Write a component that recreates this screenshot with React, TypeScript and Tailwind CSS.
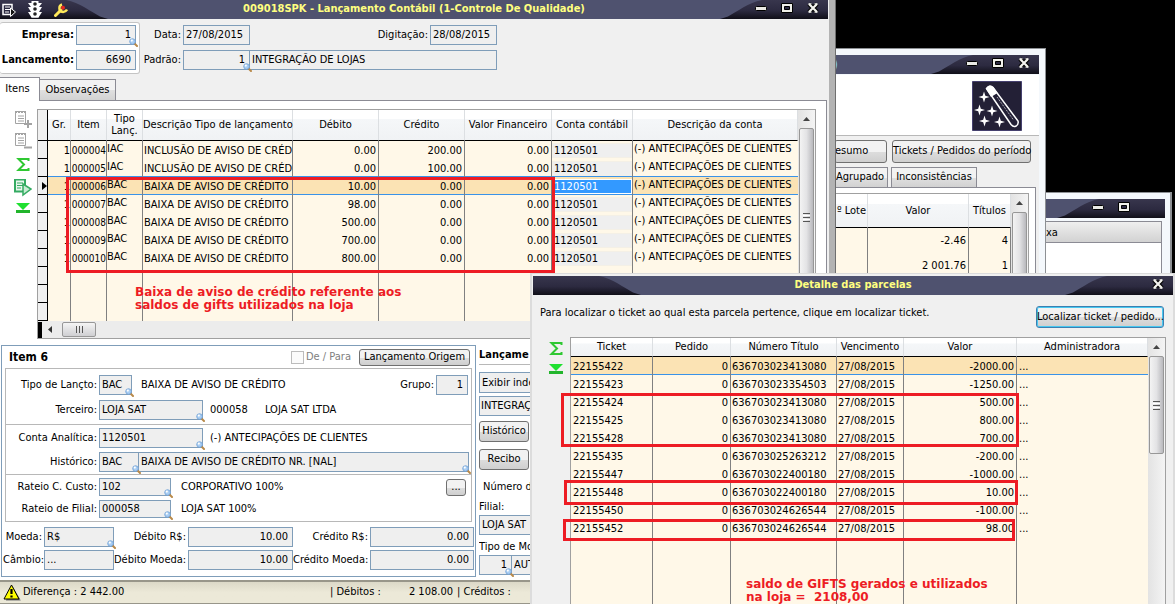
import type { ReactNode } from "react";

type Entry = { item: string; tipo: string; desc: string; debito: string; credito: string };

const entries: Entry[] = [
  { item: "000004", tipo: "IAC", desc: "INCLUSÃO DE AVISO DE CRÉD", debito: "0.00", credito: "200.00" },
  { item: "000005", tipo: "IAC", desc: "INCLUSÃO DE AVISO DE CRÉD", debito: "0.00", credito: "100.00" },
  { item: "000006", tipo: "BAC", desc: "BAIXA DE AVISO DE CRÉDITO", debito: "10.00", credito: "0.00" },
  { item: "000007", tipo: "BAC", desc: "BAIXA DE AVISO DE CRÉDITO", debito: "98.00", credito: "0.00" },
  { item: "000008", tipo: "BAC", desc: "BAIXA DE AVISO DE CRÉDITO", debito: "500.00", credito: "0.00" },
  { item: "000009", tipo: "BAC", desc: "BAIXA DE AVISO DE CRÉDITO", debito: "700.00", credito: "0.00" },
  { item: "000010", tipo: "BAC", desc: "BAIXA DE AVISO DE CRÉDITO", debito: "800.00", credito: "0.00" },
];

const tickets = [
  ["22155422", "636703023413080", "-2000.00"],
  ["22155423", "636703023354503", "-1250.00"],
  ["22155424", "636703023413080", "500.00"],
  ["22155425", "636703023413080", "800.00"],
  ["22155428", "636703023413080", "700.00"],
  ["22155435", "636703025263212", "-200.00"],
  ["22155447", "636703022400180", "-1000.00"],
  ["22155448", "636703022400180", "10.00"],
  ["22155450", "636703024626544", "-100.00"],
  ["22155452", "636703024626544", "98.00"],
];

const th =
  "border-b border-black border-r border-r-[#dcdfe2] bg-linear-to-b from-white from-30% via-[#f5f7f9] via-31% to-[#f0f2f4] p-0 text-center font-normal leading-[12px]";
const td = "overflow-hidden border-r border-[#808080] p-0 pt-0.5 align-top leading-[16px]";
const lineBelow = "shadow-[inset_0_-1px_#3a93e8]";

/* Title bar */

function MinIcon() {
  return (
    <svg width="12" height="12" viewBox="0 0 12 12" aria-hidden="true">
      <rect x="0.5" y="4.5" width="11" height="4" rx="1" fill="#e9e9e4" stroke="#000" />
    </svg>
  );
}

function MaxIcon() {
  return (
    <svg width="12" height="12" viewBox="0 0 12 12" aria-hidden="true">
      <path d="M.5 1.5h11v9H.5z" fill="#f0f0ea" stroke="#000" />
      <path d="M3.5 4.5h5v3h-5z" fill="#2c2a42" stroke="#000" />
    </svg>
  );
}

function CloseIcon() {
  return (
    <svg width="12" height="12" viewBox="0 0 12 12" aria-hidden="true">
      <path d="M2 2l8 8M10 2l-8 8" stroke="#000" strokeWidth="4.4" />
      <path d="M2 2l8 8M10 2l-8 8" stroke="#f4f4f0" strokeWidth="2.2" />
      <path d="M1.500 1.800h3M7.500 1.800h3M1.500 10.200h3M7.500 10.200h3" stroke="#f4f4f0" strokeWidth="1.200" />
    </svg>
  );
}

function Swoop({ side, id }: { side: "left" | "right"; id: string }) {
  return (
    <svg
      className={side === "left" ? "absolute top-0 left-0" : "absolute top-0 right-0 -scale-x-100"}
      width="108"
      height="19"
      viewBox="0 0 108 19"
      aria-hidden="true"
    >
      <defs>
        <linearGradient id={id} x1="0" y1="0" x2="0" y2="1">
          <stop offset="0" stopColor="#38364d" />
          <stop offset="0.55" stopColor="#2c2a40" />
          <stop offset="1" stopColor="#100f18" />
        </linearGradient>
      </defs>
      <path d="M0 0h66c14 3 24 11 34 16.500l8 2.500H0z" fill={`url(#${id})`} />
    </svg>
  );
}

function TitleBar({ id, title, left, children, leftSwoop = true }: {
  id: string;
  title?: string;
  left?: ReactNode;
  children: ReactNode;
  leftSwoop?: boolean;
}) {
  return (
    <div className="relative flex h-[19px] shrink-0 items-center bg-[#4f526f]">
      {leftSwoop && <Swoop side="left" id={`${id}-l`} />}
      <Swoop side="right" id={`${id}-r`} />
      <div className="relative flex w-[84px] items-center">{left}</div>
      <h2 className="relative flex-1 text-center text-[11px] font-bold whitespace-nowrap text-[#ffff80]">{title}</h2>
      <div className="relative flex w-[84px] items-center justify-end gap-[14px] pr-[9px] pb-[3px]">{children}</div>
    </div>
  );
}

function WindowButtons() {
  return (
    <>
      <button type="button" aria-label="Minimizar"><MinIcon /></button>
      <button type="button" aria-label="Maximizar"><MaxIcon /></button>
      <button type="button" aria-label="Fechar"><CloseIcon /></button>
    </>
  );
}

function TitleIcons() {
  return (
    <div className="flex items-center gap-3 pl-[2px]">
      <svg width="14" height="14" viewBox="0 0 14 14" aria-hidden="true">
        <path d="M1 1.500h9v10H1z" fill="#2b2940" stroke="#fff" strokeWidth="1.500" />
        <path d="M3 4h5M3 6.500h5M3 9h4" stroke="#fff" />
        <path d="M8.500 5l5 4-5 4.500z" fill="#111" stroke="#fff" />
      </svg>
      <svg width="14" height="17" viewBox="0 0 14 17" aria-hidden="true">
        <path d="M0 2h14L11 6h3l-3 5h3l-3.500 5.500h-7L0 11h3L0 6h3z" fill="#fff" />
        <path d="M3.500 0h7v16.500h-7z" fill="#fff" />
        <circle cx="7" cy="3" r="1.800" fill="#222" />
        <circle cx="7" cy="8" r="1.800" fill="#222" />
        <circle cx="7" cy="13" r="1.800" fill="#222" />
      </svg>
      <svg width="14" height="14" viewBox="0 0 14 14" aria-hidden="true">
        <path d="M1.500 12.500L7 7" stroke="#ffe95a" strokeWidth="3" strokeLinecap="round" />
        <path d="M8 1.500C4.500 2.500 4.500 8 8 8.800c2.500.500 4-.500 5-2.300" fill="none" stroke="#ffe95a" strokeWidth="2.400" />
        <circle cx="9" cy="4.800" r="2" fill="#e8281e" />
      </svg>
    </div>
  );
}

/* Fields and buttons */

function Lookup() {
  return (
    <svg className="absolute -right-[2px] -bottom-[2px]" width="9" height="9" viewBox="0 0 9 9" aria-hidden="true">
      <path d="M5.500 5.500l2.500 2.500" stroke="#b98a4a" strokeWidth="2" strokeLinecap="round" />
      <circle cx="3.500" cy="3.500" r="2.800" fill="#a9cdf2" stroke="#6f9fd6" strokeWidth="0.800" />
      <circle cx="2.800" cy="2.600" r="1.100" fill="#fff" />
    </svg>
  );
}

function Box({ id, value, width, right, lookup, label, short }: {
  id: string;
  value: string;
  width: string;
  right?: boolean;
  lookup?: boolean;
  label?: string;
  short?: boolean;
}) {
  return (
    <div className={`relative shrink-0 ${width}`}>
      <input
        id={id}
        aria-label={label}
        readOnly
        defaultValue={value}
        className={`block w-full border border-[#7f9db9] bg-[#efefef] pb-0.5 outline-none ${short ? "h-[18px]" : "h-5"} ${
          right ? "pr-1 text-right" : "pl-0.5"
        }`}
      />
      {lookup && <Lookup />}
    </div>
  );
}

function Label({ id, width, children }: { id: string; width: string; children: ReactNode }) {
  return (
    <label htmlFor={id} className={`shrink-0 pr-0.5 text-right whitespace-nowrap ${width}`}>
      {children}
    </label>
  );
}

function Button({ className, children }: { className: string; children: ReactNode }) {
  return (
    <button
      type="button"
      className={`shrink-0 rounded-[3px] border border-[#707070] bg-linear-to-b from-[#f2f2f2] from-50% via-[#dddddd] via-51% to-[#cfcfcf] text-center whitespace-nowrap ${className}`}
    >
      {children}
    </button>
  );
}

/* Scroll bars */

function VScroll({ thumb }: { thumb: string }) {
  return (
    <div className="flex w-[17px] shrink-0 flex-col bg-linear-to-r from-[#e3e3e3] to-[#f4f4f4]" aria-hidden="true">
      <div className="flex h-[18px] shrink-0 items-center justify-center">
        <svg width="7" height="4" viewBox="0 0 7 4"><path d="M0 4L3.500 0 7 4z" fill="#444" /></svg>
      </div>
      <div
        className={`mx-px flex shrink-0 flex-col items-center justify-center gap-px rounded-[2px] border border-[#979797] bg-linear-to-r from-[#f3f3f3] via-[#e3e3e5] to-[#b9b9bd] ${thumb}`}
      >
        <i className="h-px w-[7px] bg-[#555]" />
        <i className="h-px w-[7px] bg-white" />
        <i className="h-px w-[7px] bg-[#555]" />
        <i className="h-px w-[7px] bg-white" />
        <i className="h-px w-[7px] bg-[#555]" />
      </div>
    </div>
  );
}

function HScroll() {
  return (
    <div className="flex h-[17px] items-center bg-[#ececec]" aria-hidden="true">
      <div className="h-4 w-1 bg-black" />
      <svg className="mx-[6px]" width="4" height="7" viewBox="0 0 4 7"><path d="M4 0L0 3.500 4 7z" fill="#333" /></svg>
      <div className="ml-[4px] flex h-[15px] w-[34px] items-center justify-center gap-[2px] rounded-[2px] border border-[#979797] bg-linear-to-b from-[#f5f5f5] to-[#cfcfd2]">
        <i className="h-[7px] w-px bg-[#555]" />
        <i className="h-[7px] w-px bg-[#555]" />
        <i className="h-[7px] w-px bg-[#555]" />
      </div>
    </div>
  );
}

/* Tool icons beside the grids */

function Page({ color, x = 1, y = 1 }: { color: string; x?: number; y?: number }) {
  return (
    <g transform={`translate(${x} ${y})`}>
      <path d="M.5.500h10v12H.5z" fill="#fff" stroke={color} />
      <path d="M0 1h11" stroke={color} strokeWidth="2" strokeDasharray="2 1" />
      <path d="M3 5h6M3 7.500h6M3 10h6" stroke={color} />
    </g>
  );
}

function SigmaIcon() {
  return (
    <svg width="18" height="18" viewBox="0 0 18 18" aria-hidden="true">
      <path d="M14.500 5V3H4.500l5.500 5.500L4.500 14h10v-2" fill="none" stroke="#2fc832" strokeWidth="2" />
    </svg>
  );
}

function BottomIcon() {
  return (
    <svg width="18" height="18" viewBox="0 0 18 18" aria-hidden="true">
      <path d="M2 1h14L9 8z" fill="#1fe030" />
      <path d="M2 8h14v3H2z" fill="#22b52c" />
    </svg>
  );
}

function GridTools() {
  return (
    <div className="flex w-[37px] shrink-0 flex-col items-end gap-[5px] pt-px pr-[5px]">
      <button type="button" aria-label="Incluir">
        <svg width="18" height="18" viewBox="0 0 18 18">
          <Page color="#a3a3a3" />
          <path d="M14 10v8M10 14h8" stroke="#a3a3a3" strokeWidth="2" />
        </svg>
      </button>
      <button type="button" aria-label="Excluir">
        <svg width="18" height="18" viewBox="0 0 18 18">
          <Page color="#a3a3a3" y={0} />
          <path d="M10 14.500h8" stroke="#a3a3a3" strokeWidth="2" />
        </svg>
      </button>
      <button type="button" aria-label="Somar"><SigmaIcon /></button>
      <button type="button" aria-label="Executar">
        <svg width="18" height="18" viewBox="0 0 18 18">
          <path d="M1 -1.500h10v12H1z" transform="translate(0 2)" fill="#e9f7ee" stroke="#35ab62" strokeWidth="2" />
          <path d="M3 4h6M3 6.500h6M3 9h4" stroke="#35ab62" />
          <path d="M9 5l8 5-8 6z" fill="#c9ecd4" stroke="#35ab62" strokeWidth="1.500" />
        </svg>
      </button>
      <button type="button" aria-label="Último"><BottomIcon /></button>
    </div>
  );
}

function EntryGrid() {
  const blanks = [0, 1, 2];
  return (
    <table className="w-full table-fixed border-separate border-spacing-0 bg-[#fff8e8] whitespace-nowrap">
      <colgroup>
        <col className="w-[10px]" />
        <col className="w-[23px]" />
        <col className="w-9" />
        <col className="w-9" />
        <col className="w-[150px]" />
        <col className="w-[86px]" />
        <col className="w-[86px]" />
        <col className="w-[87px]" />
        <col className="w-[81px]" />
        <col />
      </colgroup>
      <thead>
        <tr className="h-[31px]">
          <th className="border-r border-b border-black bg-[#f0f0f0] p-0" aria-label="Atual" />
          <th className={th}>Gr.</th>
          <th className={th}>Item</th>
          <th className={th}>Tipo<br />Lanç.</th>
          <th className={th}>Descrição Tipo de lançamento</th>
          <th className={th}>Débito</th>
          <th className={th}>Crédito</th>
          <th className={th}>Valor Financeiro</th>
          <th className={th}>Conta contábil</th>
          <th className={th}>Descrição da conta</th>
        </tr>
      </thead>
      <tbody>
        {entries.map((e, i) => {
          const current = i === 2;
          const cell = `${td} ${current ? "bg-[#fbe3b4]" : ""} ${i === 1 || current ? lineBelow : ""}`;
          return (
            <tr key={e.item} className="h-[18px]">
              <td className="border-r border-b border-black bg-[#f0f0f0] p-0">
                {current && (
                  <svg className="ml-[4px]" width="5" height="8" viewBox="0 0 5 8" aria-hidden="true">
                    <path d="M0 0l5 4-5 4z" />
                  </svg>
                )}
              </td>
              <td className={`${cell} text-right`}>1</td>
              <td className={`${cell} text-right text-[10px]`}>{e.item}</td>
              <td className={cell}><span className="block leading-[12px]">{e.tipo}</span></td>
              <td className={`${cell} pl-px`}>{e.desc}</td>
              <td className={`${cell} pr-0.5 text-right`}>{e.debito}</td>
              <td className={`${cell} pr-0.5 text-right`}>{e.credito}</td>
              <td className={`${cell} pr-0.5 text-right`}>0.00</td>
              <td className={cell}>
                <span
                  className={`block border pt-px pl-px leading-[12px] ${
                    current ? "border-white bg-[#3399ff] text-white" : "border-[#f4f0e6] bg-[#efefef]"
                  }`}
                >
                  1120501
                </span>
              </td>
              <td className={`${cell} border-r-0 pl-px`}>
                <span className="block leading-[12px]">(-) ANTECIPAÇÕES DE CLIENTES</span>
              </td>
            </tr>
          );
        })}
        {blanks.map((b) => (
          <tr key={b} className="h-[18px]">
            <td className="border-r border-b border-black bg-[#f0f0f0] p-0" />
            <td className={td} /><td className={td} /><td className={td} /><td className={td} /><td className={td} />
            <td className={td} /><td className={td} /><td className={td} /><td className={`${td} border-r-0`} />
          </tr>
        ))}
      </tbody>
    </table>
  );
}

function ItemPanel() {
  return (
    <section className="w-[475px] shrink-0 border border-[#7f9db9] px-[3px] pb-[6px]">
      <div className="flex h-[22px] items-center pr-0.5">
        <h3 className="flex-1 pl-1 text-[12px] font-bold">Item 6</h3>
        <input id="depara" type="checkbox" disabled className="size-[13px] appearance-none border border-[#bcbcbc] bg-[#fbfbfb]" />
        <label htmlFor="depara" className="w-[55px] pl-0.5 text-[#808080]">De / Para</label>
        <Button className="h-[17px] w-[111px] leading-[14px]">Lançamento Origem</Button>
      </div>
      <div className="border border-[#b8b8b8]">
        <div className="flex flex-col gap-[5px] border-b border-[#b8b8b8] pt-[6px] pb-[4px]">
          <div className="flex items-center">
            <Label id="tipo" width="w-[93px]">Tipo de Lançto:</Label>
            <Box id="tipo" value="BAC" width="w-[33px]" lookup />
            <span className="flex-1 pl-[9px]">BAIXA DE AVISO DE CRÉDITO</span>
            <Label id="grupo" width="w-[40px]">Grupo:</Label>
            <Box id="grupo" value="1" width="w-8" right />
            <span className="w-[3px]" />
          </div>
          <div className="flex items-center">
            <Label id="terceiro" width="w-[93px]">Terceiro:</Label>
            <Box id="terceiro" value="LOJA SAT" width="w-[104px]" lookup />
            <span className="w-[62px] pl-[7px]">000058</span>
            <span>LOJA SAT LTDA</span>
          </div>
        </div>
        <div className="flex flex-col gap-1 border-b border-[#b8b8b8] pt-[3px] pb-0.5">
          <div className="flex items-center">
            <Label id="conta" width="w-[93px]">Conta Analítica:</Label>
            <Box id="conta" value="1120501" width="w-[104px]" lookup />
            <span className="pl-[7px]">(-) ANTECIPAÇÕES DE CLIENTES</span>
          </div>
          <div className="flex items-center">
            <Label id="historico" width="w-[93px]">Histórico:</Label>
            <Box id="historico" value="BAC" width="z-10 w-10" lookup />
            <Box id="historico-txt" label="Texto do histórico" value="BAIXA DE AVISO DE CRÉDITO NR. [NAL]" width="-ml-px w-[331px]" lookup />
          </div>
        </div>
        <div className="flex flex-col gap-1 pt-[3px] pb-[3px]">
          <div className="flex items-center">
            <Label id="custo" width="w-[93px]">Rateio C. Custo:</Label>
            <Box id="custo" value="102" width="w-[72px]" lookup short />
            <span className="flex-1 pl-[10px]">CORPORATIVO 100%</span>
            <Button className="mr-[5px] h-[17px] w-5 leading-[12px]">...</Button>
          </div>
          <div className="flex items-center">
            <Label id="rateio" width="w-[93px]">Rateio de Filial:</Label>
            <Box id="rateio" value="000058" width="w-[72px]" lookup short />
            <span className="pl-[10px]">LOJA SAT 100%</span>
          </div>
        </div>
      </div>
      <div className="-mr-[3px] -ml-[2px] flex flex-col gap-[3px] pt-[5px]">
        <div className="flex items-center">
          <Label id="moeda" width="w-[41px]">Moeda:</Label>
          <Box id="moeda" value="R$" width="w-[70px]" lookup />
          <Label id="deb" width="w-[74px]">Débito R$:</Label>
          <Box id="deb" value="10.00" width="w-[105px]" right />
          <Label id="cred" width="w-[77px]">Crédito R$:</Label>
          <Box id="cred" value="0.00" width="w-[104px]" right />
        </div>
        <div className="flex items-center">
          <Label id="cambio" width="w-[41px]">Câmbio:</Label>
          <Box id="cambio" value="..." width="w-[70px]" />
          <Label id="debm" width="w-[74px]">Débito Moeda:</Label>
          <Box id="debm" value="10.00" width="w-[105px]" right />
          <Label id="credm" width="w-[77px]">Crédito Moeda:</Label>
          <Box id="credm" value="0.00" width="w-[104px]" right />
        </div>
      </div>
    </section>
  );
}

function LaunchPanel() {
  return (
    <section className="flex w-[53px] flex-col overflow-hidden whitespace-nowrap">
      <h3 className="h-[20px] border-b border-[#b8b8b8] font-bold leading-[20px]">Lançame</h3>
      <div className="mt-[7px] h-[21px] border border-[#7f9db9] bg-[#efefef] pl-0.5 leading-[20px]">Exibir inde</div>
      <div className="mt-[3px] h-5 border border-[#7f9db9] bg-[#efefef] pl-px leading-[17px]">INTEGRAÇ</div>
      <Button className="mt-[5px] h-[21px] w-[50px]">Histórico</Button>
      <Button className="mt-[7px] h-[21px] w-[50px]">Recibo</Button>
      <p className="mt-[9px] pl-1 leading-[16px]">Número d</p>
      <label htmlFor="filial" className="mt-[4px] leading-[16px]">Filial:</label>
      <Box id="filial" value="LOJA SAT" width="w-[70px]" />
      <label htmlFor="tipomov" className="mt-[4px] leading-[16px]">Tipo de Mo</label>
      <div className="flex">
        <Box id="tipomov" value="1" width="z-10 w-[33px]" right lookup />
        <Box id="tipomov-txt" label="Descrição do tipo" value="AUT" width="-ml-px w-[60px]" />
      </div>
    </section>
  );
}

function MainWindow() {
  return (
    <main className="absolute inset-y-0 left-0 flex w-[836px] flex-col border-r border-[#6f6f6f] bg-[#f0f0f0]">
      <div className="flex min-h-0 flex-1 flex-col border-r-6 border-[#b3b3b3] pr-px">
        <TitleBar id="main" title="009018SPK - Lançamento Contábil (1-Controle De Qualidade)" left={<TitleIcons />}>
          <WindowButtons />
        </TitleBar>

        <div className="flex pt-[3px]">
          <div className="flex w-[140px] flex-col gap-[5px] rounded-[3px] border border-l-0 border-[#c4c4c4] bg-white pt-0.5 pb-[3px] font-bold">
            <div className="flex items-center">
              <Label id="empresa" width="w-[76px]">Empresa:</Label>
              <Box id="empresa" value="1" width="w-[60px] font-normal" right lookup />
            </div>
            <div className="flex items-center">
              <Label id="lanc" width="w-[76px]">Lancamento:</Label>
              <Box id="lanc" value="6690" width="w-[60px] font-normal" right />
            </div>
          </div>
          <div className="flex flex-col gap-[5px] pt-[3px]">
            <div className="flex items-center">
              <Label id="data" width="w-[43px]">Data:</Label>
              <Box id="data" value="27/08/2015" width="w-[67px]" />
              <Label id="digit" width="w-[180px]">Digitação:</Label>
              <Box id="digit" value="28/08/2015" width="w-[67px]" />
            </div>
            <div className="flex items-center">
              <Label id="padrao" width="w-[43px]">Padrão:</Label>
              <Box id="padrao" value="1" width="z-10 w-[67px]" right lookup />
              <Box id="padrao-txt" label="Descrição do padrão" value="INTEGRAÇÃO DE LOJAS" width="-ml-px w-[248px]" />
            </div>
          </div>
        </div>

        <div className="mt-[3px] flex items-end" role="tablist">
          <button type="button" role="tab" aria-selected="true" className="relative z-10 -mb-px h-6 w-10 border-t border-r border-[#8b8b94] bg-white pr-1">
            Itens
          </button>
          <button type="button" role="tab" aria-selected="false" className="h-[21px] w-[76px] border border-b-0 border-l-0 border-[#8b8b94] bg-linear-to-b from-[#f2f2f2] from-50% via-[#e0e0e0] via-51% to-[#d2d2d2]">
            Observações
          </button>
        </div>

        <div className="mr-px flex flex-1 flex-col border-t border-r border-[#8b8b94] bg-white">
          <div className="mt-2 flex pr-[10px]">
            <GridTools />
            <div className="relative min-w-0 flex-1 border border-[#a0a0a0]">
              <div className="flex">
                <div className="min-w-0 flex-1"><EntryGrid /></div>
                <VScroll thumb="h-[178px]" />
              </div>
              <HScroll />
              <div className="absolute top-[67px] left-[28px] h-[96px] w-[489px] border-3 border-[#ed1c24]" />
              <p className="absolute top-[176px] left-[97px] font-['DejaVu_Sans',sans-serif] text-[12px] leading-[13px] font-bold whitespace-nowrap text-[#ed1c24]">
                Baixa de aviso de crédito referente aos
                <br />
                saldos de gifts utilizados na loja
              </p>
            </div>
          </div>
          <div className="mt-[6px] flex gap-[3px] pl-px">
            <ItemPanel />
            <LaunchPanel />
          </div>
        </div>
      </div>

      <footer className="flex h-6 w-full shrink-0 items-center border-t-2 border-b border-[#98968a] bg-linear-to-b from-[#dcd9c8] via-[#ece9d8] to-[#ece9d8] whitespace-pre">
        <svg className="ml-[3px]" width="18" height="17" viewBox="0 0 18 17" aria-hidden="true">
          <path d="M9 2l8 14H2z" fill="#777" transform="translate(.8 .6)" />
          <path d="M8.500 1L16 15H1z" fill="#ffff00" stroke="#000" />
          <path d="M8.500 5v5M8.500 11.500v2" stroke="#000" strokeWidth="2.200" />
        </svg>
        <span className="w-[309px] pl-0.5">Diferença : 2 442.00</span>
        <span className="w-[50px]">| Débitos :</span>
        <span className="w-[73px] text-right">2 108.00</span>
        <span className="pl-1">| Créditos :</span>
      </footer>
    </main>
  );
}

function Star({ x, y }: { x: number; y: number }) {
  return <path transform={`translate(${x} ${y})`} d="M0-5.500L1.300-1.300 5.500 0 1.300 1.300 0 5.500-1.300 1.300-5.500 0-1.300-1.300z" fill="#fff" />;
}

function TicketsWindow() {
  return (
    <section className="absolute top-12 left-[836px] flex h-[240px] w-[210px] flex-col border-t border-r border-[#8d9094] bg-[#f4f8fc] pt-[6px] pr-[6px]">
      <TitleBar id="tickets" leftSwoop={false} left={<span className="-ml-[3px] text-[12px] font-bold text-[#7cc0e8]">)</span>}>
        <WindowButtons />
      </TitleBar>
      <div className="mt-px flex h-[61px] shrink-0 justify-end border-b border-[#b8b8b8] bg-white pt-[6px] pr-[17px]">
        <svg width="50" height="50" viewBox="0 0 50 50" aria-hidden="true">
          <path d="M.5.500h49v49H.5z" fill="#232036" stroke="#45406e" />
          <path d="M14.500 7.500q3-4 6.500-1L46 40q1 4-3 5.500-2 .5-4-2z" fill="none" stroke="#fff" strokeWidth="1.500" />
          <path d="M14 8q3-6 7.500-2l4 6-6.500 4z" fill="#fff" />
          <path d="M25 16l16.500 23" stroke="#fff" strokeDasharray="1 1" strokeWidth="0.800" />
          <Star x={12} y={16} />
          <Star x={7.5} y={29} />
          <Star x={20} y={30} />
          <Star x={12.5} y={40} />
          <Star x={27.5} y={41} />
        </svg>
      </div>
      <div className="flex min-h-0 flex-1 flex-col bg-[#f0f0f0] pt-1 pr-[3px]">
        <div className="flex gap-[5px] pb-1">
          <Button className="-ml-[2px] h-[23px] w-[53px] pr-5">esumo</Button>
          <Button className="h-[23px] w-[139px]">Tickets / Pedidos do período</Button>
        </div>
        <div className="flex gap-[3px]" role="tablist">
          <button type="button" role="tab" className="h-5 w-[52px] border border-b-0 border-l-0 border-[#8b8b94] bg-linear-to-b from-[#f2f2f2] from-50% via-[#e0e0e0] via-51% to-[#d2d2d2] pr-1">
            Agrupado
          </button>
          <button type="button" role="tab" className="h-5 w-[86px] border border-b-0 border-[#8b8b94] bg-linear-to-b from-[#f2f2f2] from-50% via-[#e0e0e0] via-51% to-[#d2d2d2]">
            Inconsistências
          </button>
        </div>
        <div className="min-h-0 flex-1 border-t border-r border-[#8b8b94] bg-white pt-[5px] pr-[6px]">
          <div className="flex h-full border-t border-r border-[#a0a0a0]">
            <table className="h-fit flex-1 table-fixed border-separate border-spacing-0 bg-[#fff8e8] whitespace-nowrap">
              <colgroup>
                <col className="w-8" />
                <col />
                <col className="w-[42px]" />
              </colgroup>
              <thead>
                <tr className="h-[34px]">
                  <th className={th}>º Lote</th>
                  <th className={th}>Valor</th>
                  <th className={th}>Títulos</th>
                </tr>
              </thead>
              <tbody>
                <tr className="h-[25px]">
                  <td className={td} />
                  <td className={`${td} pr-0.5 text-right`}><span className="block pt-[3px]">-2.46</span></td>
                  <td className={`${td} pr-0.5 text-right`}><span className="block pt-[3px]">4</span></td>
                </tr>
                <tr className="h-[25px]">
                  <td className={td} />
                  <td className={`${td} pr-0.5 text-right`}><span className="block pt-[3px]">2 001.76</span></td>
                  <td className={`${td} pr-0.5 text-right`}><span className="block pt-[3px]">1</span></td>
                </tr>
              </tbody>
            </table>
            <VScroll thumb="h-[140px]" />
          </div>
        </div>
      </div>
    </section>
  );
}

function BackWindow() {
  return (
    <section className="absolute top-48 left-[1046px] flex h-[100px] w-[126px] flex-col border-t border-r-2 border-[#8d9094] bg-[#f4f8fc] pt-[6px] pr-[5px]">
      <TitleBar id="back" leftSwoop={false}>
        <div className="flex gap-[14px] pr-[26px]">
          <button type="button" aria-label="Minimizar"><MinIcon /></button>
          <button type="button" aria-label="Maximizar"><MaxIcon /></button>
        </div>
      </TitleBar>
      <div className="mt-[3px] mr-[3px] flex-1 border-t border-r border-[#8b8b94] bg-white">
        <div className="h-[21px] border-b border-[#8b8b94] bg-linear-to-b from-[#efefef] to-[#d2d2d2] leading-[22px]">xa</div>
      </div>
    </section>
  );
}

function TicketGrid() {
  return (
    <table className="h-full w-full table-fixed border-separate border-spacing-0 bg-[#fff8e8] whitespace-nowrap">
      <colgroup>
        <col className="w-[82px]" />
        <col className="w-[78px]" />
        <col className="w-[106px]" />
        <col className="w-[67px]" />
        <col className="w-[113px]" />
        <col />
      </colgroup>
      <thead>
        <tr className="h-[19px]">
          <th className={th}>Ticket</th>
          <th className={th}>Pedido</th>
          <th className={th}>Número Título</th>
          <th className={th}>Vencimento</th>
          <th className={th}>Valor</th>
          <th className={th}>Administradora</th>
        </tr>
      </thead>
      <tbody>
        {tickets.map(([ticket, titulo, valor], i) => {
          const cell = i === 0 ? `${td} bg-[#fbe3b4] ${lineBelow}` : td;
          return (
            <tr key={ticket} className="h-[18px]">
              <td className={`${cell} pl-0.5`}>{ticket}</td>
              <td className={`${cell} pr-0.5 text-right`}>0</td>
              <td className={`${cell} pl-px`}>{titulo}</td>
              <td className={`${cell} pl-px`}>27/08/2015</td>
              <td className={`${cell} pr-0.5 text-right`}>{valor}</td>
              <td className={`${cell} border-r-0 pl-0.5`}>...</td>
            </tr>
          );
        })}
        <tr>
          <td className={td} /><td className={td} /><td className={td} />
          <td className={td} /><td className={td} /><td className={`${td} border-r-0`} />
        </tr>
      </tbody>
    </table>
  );
}

function DetailDialog() {
  return (
    <section className="absolute top-[273px] right-0 bottom-0 left-[530px] flex flex-col border-t border-r-2 border-l-2 border-[#dcdcdc] bg-[#f0f0f0] pt-0.5 pl-px">
      <TitleBar id="detail" title="Detalhe das parcelas">
        <button type="button" aria-label="Fechar"><CloseIcon /></button>
      </TitleBar>
      <div className="flex items-start justify-between pt-[11px] pr-[9px] pl-[7px]">
        <p className="leading-[13px]">Para localizar o ticket ao qual esta parcela pertence, clique em localizar ticket.</p>
        <button
          type="button"
          className="h-[22px] w-32 rounded-[3px] border border-[#3c7fb1] bg-linear-to-b from-[#f2f2f2] from-50% via-[#dddddd] via-51% to-[#cfcfcf] whitespace-nowrap ring-1 ring-[#48c8f0] ring-inset"
        >
          Localizar ticket / pedido...
        </button>
      </div>
      <div className="relative mt-[9px] flex min-h-0 flex-1 pr-[7px]">
        <div className="flex w-[37px] shrink-0 flex-col items-end gap-[5px] pt-[3px] pr-[5px]">
          <button type="button" aria-label="Somar parcelas"><SigmaIcon /></button>
          <button type="button" aria-label="Última parcela"><BottomIcon /></button>
        </div>
        <div className="flex min-w-0 flex-1 border border-b-0 border-[#a0a0a0] bg-white">
          <div className="min-w-0 flex-1"><TicketGrid /></div>
          <VScroll thumb="h-[98px]" />
        </div>
        <div className="absolute top-[56px] left-[28px] h-[54px] w-[458px] border-3 border-[#ed1c24]" />
        <div className="absolute top-[143px] left-[31px] h-[25px] w-[454px] border-3 border-[#ed1c24]" />
        <div className="absolute top-[182px] left-[30px] h-[22px] w-[452px] border-3 border-[#ed1c24]" />
        <p className="absolute top-[241px] left-[213px] font-['DejaVu_Sans',sans-serif] text-[12px] leading-[13px] font-bold whitespace-pre text-[#ed1c24]">
          {"saldo de GIFTS gerados e utilizados\nna loja =  2108,00"}
        </p>
      </div>
    </section>
  );
}

export default function App() {
  return (
    <div className="relative h-screen w-full overflow-hidden bg-black font-['DejaVu_Sans_Condensed','DejaVu_Sans',sans-serif] text-[11px] text-black">
      <BackWindow />
      <TicketsWindow />
      <MainWindow />
      <DetailDialog />
    </div>
  );
}
